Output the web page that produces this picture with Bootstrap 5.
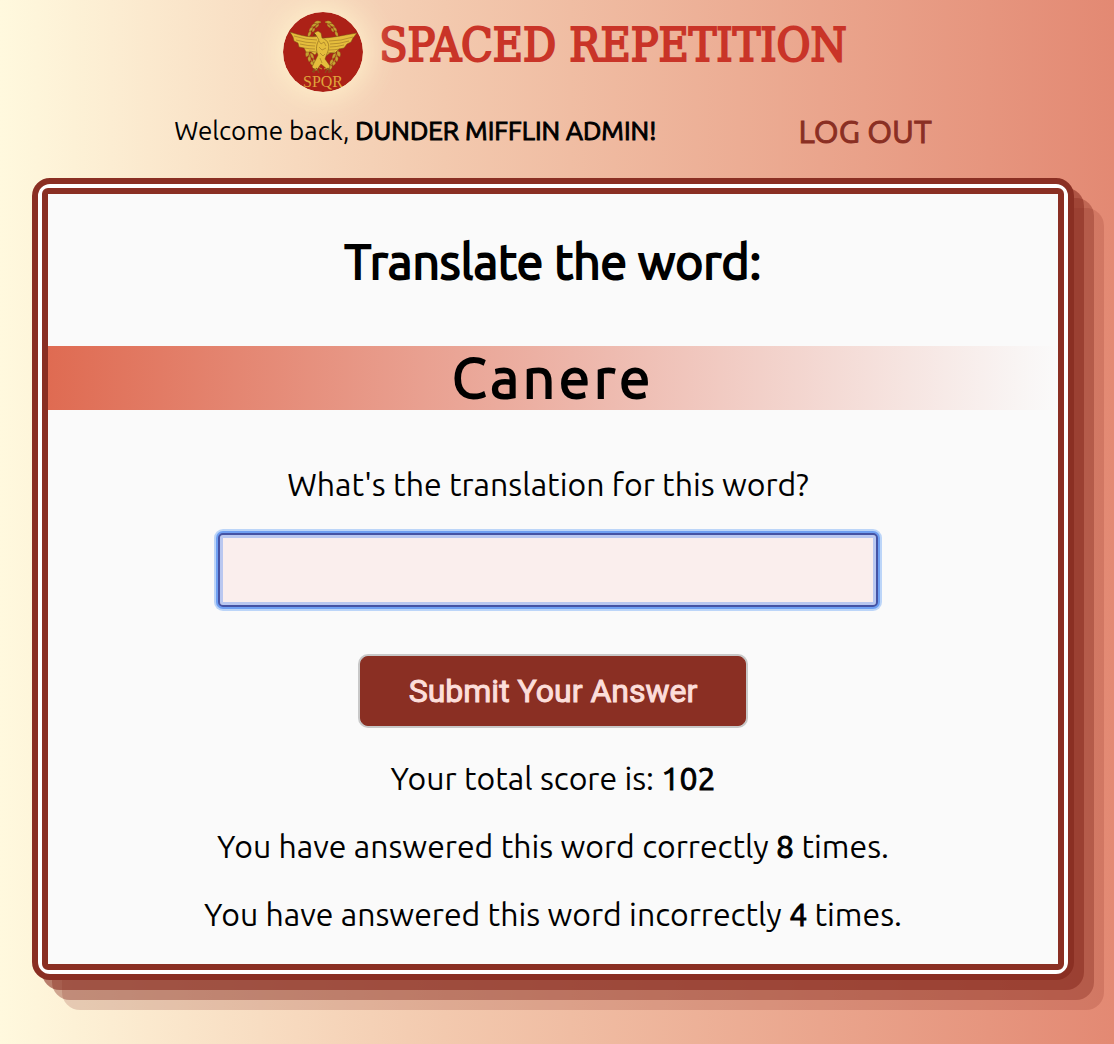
<!DOCTYPE html>
<html lang="en">
<head>
<meta charset="utf-8">
<meta name="viewport" content="width=device-width, initial-scale=1">
<title>Spaced Repetition</title>
<link rel="stylesheet" href="https://cdn.jsdelivr.net/npm/bootstrap@5.3.0/dist/css/bootstrap.min.css">
<style>
  :root { --brick: #8a2f23; }
  body {
    min-height: 100vh;
    color: #000;
    font-family: Ubuntu, "Noto Sans", sans-serif;
    background: linear-gradient(to right, #fff9de, #f3c9ae 40%, #e38973);
  }
  .page-shell { padding: 12px 40px 32px 32px; }
  .brand-row { gap: 16px; padding-left: 24px; }
  .brand-logo {
    width: 80px; height: 80px; border-radius: 50%;
    box-shadow: 0 0 32px 4px #fff3cc;
    position: relative; z-index: 1;
  }
  .brand-title {
    font: 400 46px/66px "DejaVu Serif Condensed", "DejaVu Serif", serif;
    color: #c93428; -webkit-text-stroke: 2px #c93428;
  }
  .user-row { margin-top: 19px; font-size: 26px; line-height: 40px; }
  .heavy { font-weight: 400; -webkit-text-stroke: 1px currentColor; }
  .logout-link { color: var(--brick); font-size: 32px; }
  .quiz-frame {
    margin-top: 27px; padding: 4px;
    border: 6px solid var(--brick); border-radius: 18px;
    background: #fff;
    box-shadow: 10px 10px rgba(138,47,35,.6), 20px 20px rgba(138,47,35,.4), 30px 30px rgba(138,47,35,.2);
  }
  .quiz-panel {
    padding: 35px 0 30px;
    border: 6px solid var(--brick); border-radius: 6px;
    background: #fafafa;
    font-size: 32px; line-height: 40px;
  }
  .quiz-heading { font-size: 48px; line-height: 64px; margin-bottom: 53px; -webkit-text-stroke-width: 2px; }
  .quiz-word {
    font-size: 56px; line-height: 64px; letter-spacing: 4px; margin-bottom: 54px;
    background: linear-gradient(to right, #df6b52, #fafafa);
    -webkit-text-stroke-width: 2px;
  }
  .quiz-form { gap: 28px; }
  .answer-field { padding-right: 10px; gap: 29px; }
  .answer-input, .answer-input:focus {
    width: 66%; height: 74px; font-size: 32px;
    background: #faeeed; border: 2px solid #4553a4; border-radius: 5px;
    box-shadow: inset 0 0 0 3px #b9c7f0, 0 0 0 2px #6f9ff2, 0 0 0 4px #bcd5f8;
  }
  .submit-btn, .submit-btn:hover {
    margin-top: 21px; padding: 0 48px; height: 70px;
    font-family: Roboto, sans-serif; font-size: 32px;
    color: #fcdeda; background: var(--brick); border: 1px solid var(--brick); border-radius: 8px;
    box-shadow: 0 0 0 2px #c8c8c8;
  }
  .score-list { margin-top: 32px; gap: 28px; }
</style>
</head>
<body>
<div class="page-shell">
  <header>
    <div class="brand-row d-flex justify-content-center">
      <svg class="brand-logo flex-shrink-0" viewBox="0 0 80 80" role="img" aria-label="SPQR eagle">
        <circle cx="40" cy="40" r="40" fill="#ac2117"/>
        <g fill="none" stroke="#c39b2e" stroke-width="1">
          <path d="M38 10C27 12 24 24 25 37S32 54 39 57M42 10C53 12 56 24 55 37S48 54 41 57"/>
        </g>
        <g fill="#c7a232" stroke="#7d4e18" stroke-width=".3">
          <path id="leaves" d="M38 10q-4-3-7 1 4 2 7-1M34 12q-4-2-6 3 4 0 6-3M30 15q-4 0-4 5 4-1 4-5M28 19q-4 1-3 6 4-2 3-6M36 12q-3 0-4 4 4-1 4-4M32 16q-3 0-3 4 3 0 3-4M26 39q-5 0-3 6 4-1 3-6M27 44q-4 1-1 6 3-2 1-6M29 49q-4 2 1 5 2-3-1-5M27 41q4 0 4 6-4-1-4-6M30 47q4 1 3 6-4-2-3-6M32 53q-3 2 1 5 3-2-1-5"/>
          <use href="#leaves" transform="matrix(-1 0 0 1 80 0)"/>
        </g>
        <g fill="#e5bd3c" stroke="#755116" stroke-width=".5" stroke-linejoin="round">
          <path d="M36 24C28 26 19 24 7 20l3 5 1 4 4 2 1 4 5 1 2 4 5 0 4 3 6-8z"/>
          <path d="M39 26c8 0 18-2 35-5l-4 5-2 4-4 2-3 4-5 1-4 4-5 0-4 3-7-7z"/>
          <path d="M33 23l-2-2 4-2 3 2 1 5c6 2 8 7 6 13l-3 8 5 7-2 4-7-6-5 7-4-4 6-12c-3-6-1-12 1-15z"/>
        </g>
        <g fill="none" stroke="#8a6520" stroke-width=".5">
          <path d="M11 24q12 4 23 4M13 28q10 3 20 3M17 32q8 2 15 2M21 36q6 1 11 1M26 39l7 1M70 25q-12 4-24 4M66 29q-10 3-19 3M61 33q-8 2-14 2M57 37q-6 1-11 1M52 40l-7 1M36 29l2 3 3-2 2 4M36 35l3 3 4-2M37 41l3 3 2-2M37 46l2 5"/>
        </g>
        <path d="M31 56v5m3-5-5 4m5-3 2 4M46 56v5m-2-5 5 4m-5-3-2 4" stroke="#80591b" fill="none"/>
        <path d="M31 21l-1 3 3-1" fill="#664010"/>
        <text x="40" y="75" text-anchor="middle" font-family="Liberation Serif, serif" font-size="16" fill="#dfa43b">SPQR</text>
      </svg>
      <h1 class="brand-title m-0">SPACED REPETITION</h1>
    </div>
    <div class="user-row d-flex flex-wrap justify-content-evenly">
      <span>Welcome back, <strong class="heavy">DUNDER MIFFLIN ADMIN!</strong></span>
      <a class="logout-link heavy text-decoration-none" href="#">LOG OUT</a>
    </div>
  </header>
  <main class="quiz-frame text-center">
    <div class="quiz-panel">
      <h2 class="quiz-heading heavy">Translate the word:</h2>
      <div class="quiz-word heavy">Canere</div>
      <form class="quiz-form d-flex flex-column align-items-center">
        <div class="answer-field w-100 d-flex flex-column align-items-center">
          <label for="answer">What's the translation for this word?</label>
          <input class="answer-input form-control" id="answer" type="text" autocomplete="off">
        </div>
        <button class="submit-btn btn heavy" type="button">Submit Your Answer</button>
      </form>
      <div class="score-list d-flex flex-column">
        <p class="m-0">Your total score is: <strong class="heavy">102</strong></p>
        <p class="m-0">You have answered this word correctly <strong class="heavy">8</strong> times.</p>
        <p class="m-0">You have answered this word incorrectly <strong class="heavy">4</strong> times.</p>
      </div>
    </div>
  </main>
</div>
<script src="https://cdn.jsdelivr.net/npm/bootstrap@5.3.0/dist/js/bootstrap.bundle.min.js"></script>
</body>
</html>
